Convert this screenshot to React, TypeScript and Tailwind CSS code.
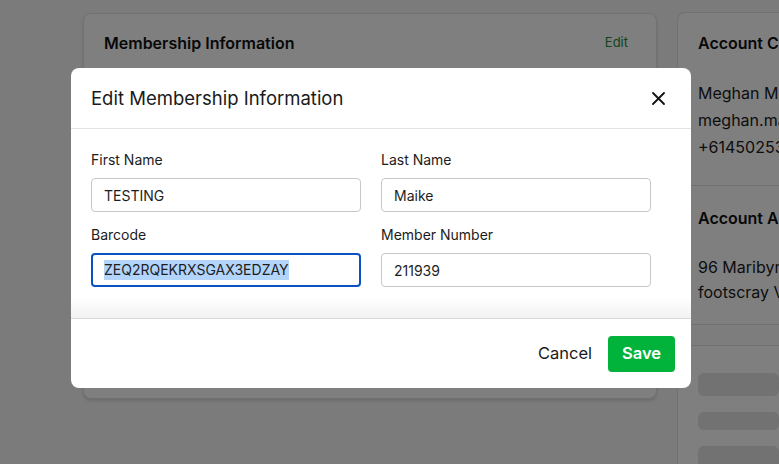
import React from "react";

const font = { fontFamily: "Inter, 'Noto Sans', sans-serif" };

interface FieldProps {
  label: string;
  value: string;
  focused?: boolean;
}

const Field: React.FC<FieldProps> = ({ label, value, focused }) => {
  return (
    <div className="flex flex-col">
      <label className="mb-2 text-[14px] leading-5 text-[#1c1c1c]">{label}</label>
      {focused ? (
        <div className="flex h-[34px] items-center rounded-[4px] border-2 border-[#0a52c4] px-[11px] text-[14px] text-[#1e1e1e]">
          <span className="bg-[#b3d4fb] leading-5">{value}</span>
        </div>
      ) : (
        <div className="flex h-[34px] items-center rounded-[4px] border border-[#c7c7c7] px-3 text-[14px] text-[#1e1e1e]">
          {value}
        </div>
      )}
    </div>
  );
};

const Skeleton: React.FC<{ className?: string }> = ({ className }) => (
  <div className={"rounded-md bg-[#e4e4e4] " + (className ?? "")} />
);

export default function App() {
  return (
    <div
      className="relative h-[464px] w-full overflow-hidden bg-[#f6f6f6]"
      style={font}
    >
      {/* page behind the dialog */}
      <div className="flex gap-5 pl-[83px] pt-[13px]">
        <section className="h-[386px] w-[574px] shrink-0 rounded-lg border border-[#e2e2e2] bg-white shadow-[0_2px_3px_rgba(0,0,0,0.12)]">
          <div className="flex items-center justify-between pl-5 pr-7 pt-[17px]">
            <h2 className="text-[16px] font-semibold leading-6 text-[#111]">
              Membership Information
            </h2>
            <button className="text-[13px] text-[#1a8a3c]">Edit</button>
          </div>
        </section>

        <aside className="mt-[-1px] h-[470px] min-w-0 flex-1 overflow-hidden whitespace-nowrap rounded-tl-lg border-l border-t border-[#e2e2e2] bg-white">
          <div className="border-b border-[#e2e2e2] pb-6 pl-5 pt-[18px]">
            <h3 className="text-[16px] font-semibold leading-6 text-[#111]">Account Contact</h3>
            <div className="mt-[25px] text-[16px] leading-[27px] text-[#1a1a1a]">
              <p>Meghan Maike</p>
              <p>meghan.maike@gmail.com</p>
              <p>+61450253987</p>
            </div>
          </div>
          <div className="border-b border-[#e2e2e2] pb-[19px] pl-5 pt-5">
            <h3 className="text-[16px] font-semibold leading-6 text-[#111]">Account Address</h3>
            <div className="mt-[25px] text-[16px] leading-[25px] text-[#1a1a1a]">
              <p>96 Maribyrnong St</p>
              <p>footscray VIC 3011</p>
            </div>
          </div>
          <div className="h-[21px] border-b border-[#e2e2e2] bg-[#fafafa]" />
          <div className="flex flex-col gap-4 pl-5 pt-[27px]">
            <Skeleton className="h-[23px] w-full" />
            <Skeleton className="h-[18px] w-full" />
            <Skeleton className="h-[23px] w-full" />
          </div>
        </aside>
      </div>

      {/* backdrop */}
      <div className="absolute inset-0 bg-black/50" />

      {/* dialog */}
      <div className="absolute left-[71px] top-[68px] w-[620px] overflow-hidden rounded-lg bg-white">
        <header className="flex h-[61px] items-center justify-between border-b border-[#e3e3e3] pl-5 pr-[21px]">
          <h1 className="text-[18.5px] leading-6 text-[#1a1a1a]">Edit Membership Information</h1>
          <button className="flex h-6 w-6 items-center justify-center text-[#111]" aria-label="Close">
            <svg width="13" height="13" viewBox="0 0 13 13" fill="none">
              <path d="M1 1L12 12M12 1L1 12" stroke="currentColor" strokeWidth="1.8" strokeLinecap="round" />
            </svg>
          </button>
        </header>

        <div>
          <div className="grid grid-cols-2 gap-x-5 gap-y-[13px] pl-5 pr-10 pt-[21px]">
            <Field label="First Name" value="TESTING" />
            <Field label="Last Name" value="Maike" />
            <Field label="Barcode" value="ZEQ2RQEKRXSGAX3EDZAY" focused />
            <Field label="Member Number" value="211939" />
          </div>
          <div className="mt-[11px] h-5 bg-gradient-to-b from-white to-[#f1f1f1]" />
        </div>

        <footer className="flex h-[70px] items-center justify-end gap-4 border-t border-[#dadada] pr-4">
          <button className="text-[16.5px] text-[#1a1a1a]">Cancel</button>
          <button className="h-9 w-[67px] rounded-[4px] bg-[#02b33b] text-[16.5px] font-semibold text-white">
            Save
          </button>
        </footer>
      </div>
    </div>
  );
}
